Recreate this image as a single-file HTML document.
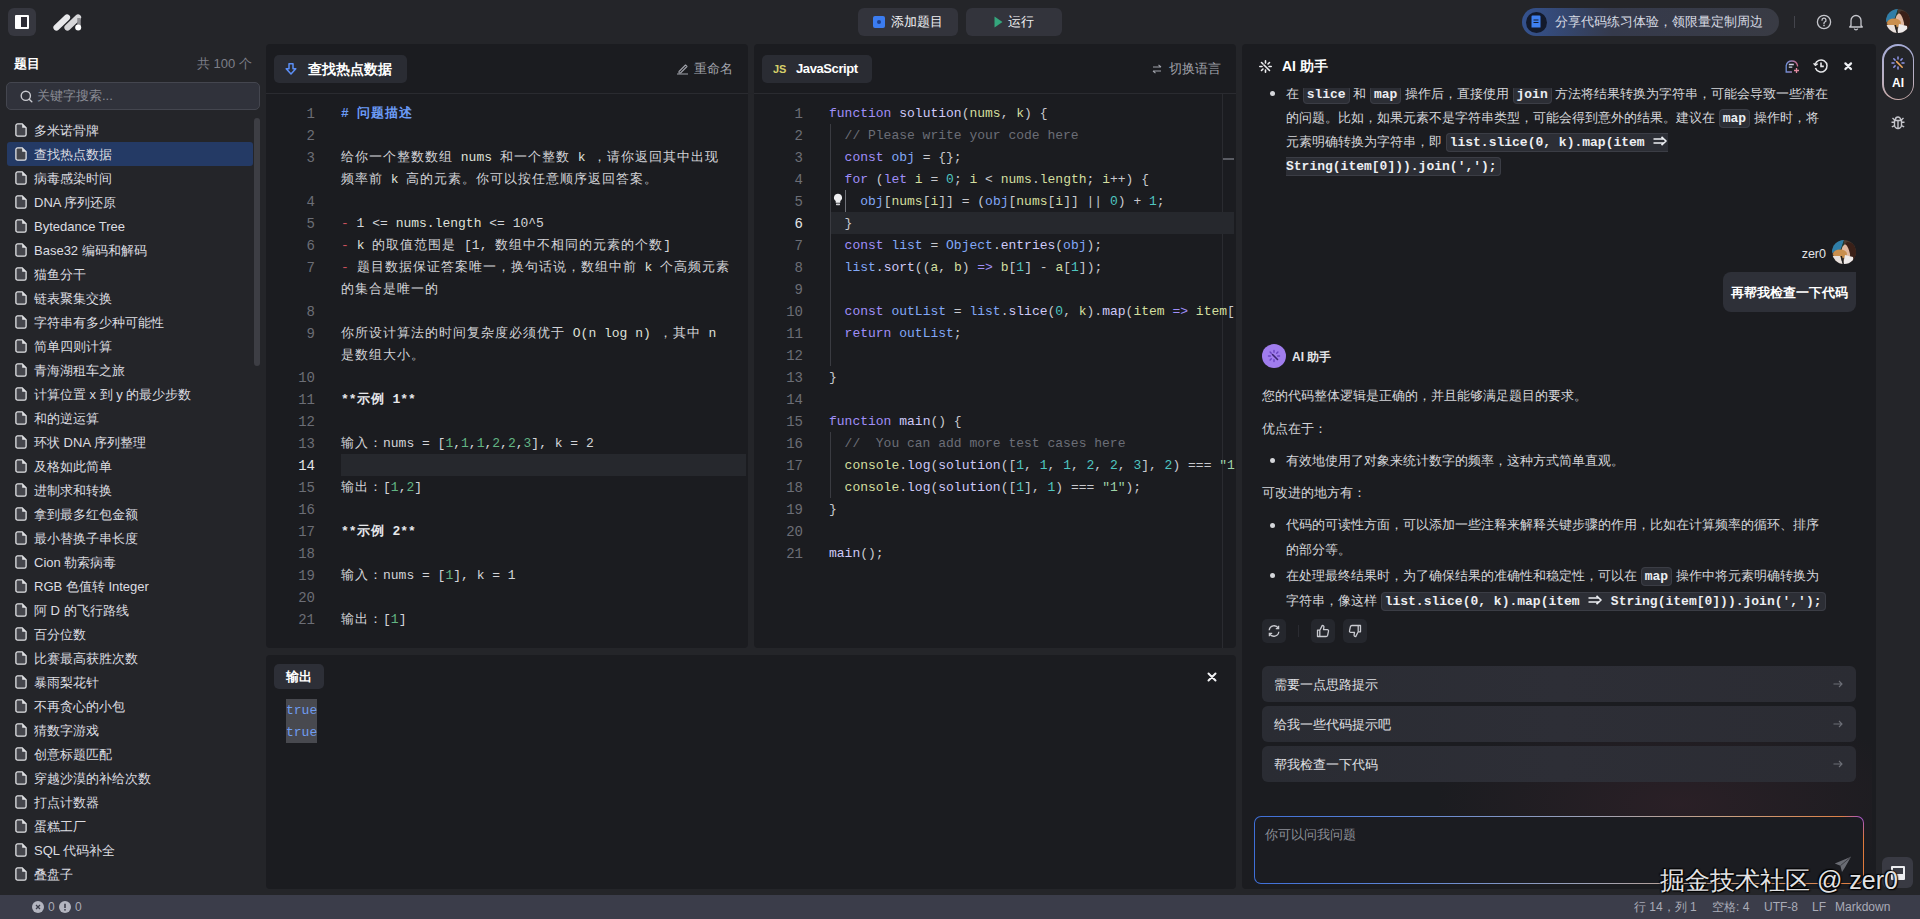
<!DOCTYPE html>
<html><head><meta charset="utf-8">
<style>
*{box-sizing:border-box;margin:0;padding:0}
html,body{width:1920px;height:919px;overflow:hidden;background:#242529;font-family:"Liberation Sans",sans-serif;color:#d4d5d9}
.abs{position:absolute}
.mono{font-family:"Liberation Mono",monospace}
/* top bar */
#top{position:absolute;left:0;top:0;width:1920px;height:44px;background:#242529}
.tbtn{position:absolute;top:8px;height:28px;border-radius:6px;background:#33343c}
/* sidebar */
#side{position:absolute;left:0;top:44px;width:266px;height:851px;background:#242529}
.item{position:absolute;left:7px;width:246px;height:24px;font-size:13px;line-height:24px;color:#dcdde1;white-space:nowrap}
.item.sel{background:#243a65;border-radius:3px}
.item svg{position:absolute;left:8px;top:5px}
.item span{position:absolute;left:27px;top:1px}
/* panels */
.panel{position:absolute;background:#1b1c20;border-radius:4px;overflow:hidden}
.phead{position:absolute;left:0;top:0;right:0;height:50px;border-bottom:1px solid #2a2b30}
.tab{position:absolute;top:11px;height:28px;border-radius:5px;background:#2a2c33;font-weight:bold;font-size:14px;color:#fff;line-height:28px}
.ed{position:absolute;left:0;top:59px;right:0;font-family:"Liberation Mono",monospace;font-size:13px;line-height:22px}
.ln{position:absolute;width:49px;text-align:right;color:#6c6e76;height:22px;font-size:14px}
.ln.act{color:#e4e5e8}
.cl{position:absolute;left:75px;white-space:pre;height:22px;color:#d2d3d6}
.cj{letter-spacing:1px}
/* status */
#status{position:absolute;left:0;top:895px;width:1920px;height:24px;background:#3b3d4a;font-size:12px;color:#a9abb7;line-height:24px}
.tl{position:absolute;font-size:13px;line-height:24px;color:#d5d6da;white-space:nowrap}
code{font-family:"Liberation Mono",monospace;font-weight:bold;font-size:13px;color:#eceef2;background:#2c2e35;border:1px solid #3b3d45;border-radius:4px;padding:1px 3px;margin:0 0px}
.dot{position:absolute;left:28px;width:5px;height:5px;border-radius:3px;background:#d5d6da}
.abtn{position:absolute;top:531px;width:24px;height:24px;border-radius:5px;background:#25272d}
.abtn svg{position:absolute;left:5px;top:5px}
.card{position:absolute;left:20px;width:594px;height:36px;border-radius:6px;background:linear-gradient(90deg,#2a2c33,#2d2e36 50%,#2b2c33);font-size:13px;color:#e0e1e5;line-height:36px}
.card span{position:absolute;left:12px;top:1px}
.card i{position:absolute;right:13px;top:14px;font-style:normal;line-height:0}
.arr{display:inline-block;width:15.6px;height:10px;position:relative;vertical-align:0px}.arr svg{position:absolute;left:0;top:0}
</style></head>
<body>
<div id="top">
  <div class="abs" style="left:8px;top:8px;width:28px;height:28px;border-radius:6px;background:#36373f"></div>
  <div class="abs" style="left:15px;top:15px;width:14px;height:14px;background:#fff;border-radius:1px"></div>
  <div class="abs" style="left:21px;top:17px;width:6px;height:10px;background:#2d2c35"></div>
  <svg class="abs" style="left:52px;top:12px" width="34" height="20" viewBox="0 0 34 20">
    <path d="M4.5 15.5L15 5.5" stroke="#e8e8ea" stroke-width="6.2" stroke-linecap="round"/>
    <path d="M15.5 15.5L26 5.5" stroke="#d6d6d8" stroke-width="6.2" stroke-linecap="round"/>
    <path d="M27 6v9" stroke="#8c8c90" stroke-width="3.5"/>
    <circle cx="26.2" cy="15.6" r="3" fill="#fff"/>
  </svg>
  <div class="tbtn" style="left:858px;width:100px"></div>
  <div class="abs" style="left:873px;top:16px;width:12px;height:12px;border-radius:2px;background:#3b7cf0"></div>
  <div class="abs" style="left:877px;top:20px;width:4px;height:4px;border-radius:2px;background:#1d3f8a"></div>
  <div class="abs" style="left:891px;top:14px;font-size:13px;color:#f0f0f2;line-height:16px">添加题目</div>
  <div class="tbtn" style="left:966px;width:96px"></div>
  <svg class="abs" style="left:994px;top:16px" width="9" height="12" viewBox="0 0 9 12"><path d="M0.5 0.5L8.5 6L0.5 11.5z" fill="#35a67d"/></svg>
  <div class="abs" style="left:1008px;top:14px;font-size:13px;color:#f0f0f2;line-height:16px">运行</div>
  <div class="abs" style="left:1522px;top:8px;width:257px;height:28px;border-radius:14px;background:linear-gradient(90deg,#34528f 0%,#353a4c 35%,#393b44 100%)"></div>
  <div class="abs" style="left:1525.5px;top:11.5px;width:21px;height:21px;border-radius:11px;background:#131a2c"></div>
  <svg class="abs" style="left:1531px;top:15px" width="10" height="13" viewBox="0 0 10 13"><path d="M1.5 0.5h7a1 1 0 0 1 1 1v11h-9v-11a1 1 0 0 1 1-1z" fill="#3f80f0"/><path d="M2.5 5h5M2.5 7.5h5" stroke="#131a2c" stroke-width="1.1"/></svg>
  <div class="abs" style="left:1555px;top:14px;font-size:13px;color:#d7dae3;line-height:16px">分享代码练习体验，领限量定制周边</div>
  <div class="abs" style="left:1794px;top:16px;width:1px;height:12px;background:#44454c"></div>
  <svg class="abs" style="left:1816px;top:14px" width="16" height="16" viewBox="0 0 16 16"><circle cx="8" cy="8" r="6.6" fill="none" stroke="#c5c6cc" stroke-width="1.3"/><path d="M6 6.2a2 2 0 1 1 2.8 1.8c-.6.3-.8.6-.8 1.3v.4" fill="none" stroke="#c5c6cc" stroke-width="1.3" stroke-linecap="round"/><circle cx="8" cy="11.6" r=".8" fill="#c5c6cc"/></svg>
  <svg class="abs" style="left:1848px;top:13px" width="16" height="18" viewBox="0 0 16 18"><path d="M3 12.5V7.5a5 5 0 0 1 10 0v5l1.3 1.5H1.7z" fill="none" stroke="#c5c6cc" stroke-width="1.3" stroke-linejoin="round"/><path d="M6.3 15.6a1.8 1.8 0 0 0 3.4 0" fill="none" stroke="#c5c6cc" stroke-width="1.3"/></svg>
  <div class="abs" style="left:1886px;top:9px;width:24px;height:24px"><svg width="24" height="24" viewBox="0 0 24 24"><defs><clipPath id="avc1"><circle cx="12" cy="12" r="12"/></clipPath></defs><g clip-path="url(#avc1)"><rect width="24" height="24" fill="#4a3a30"/><path d="M0 0h12L9 9 0 13z" fill="#2f7ea8"/><path d="M12 0l-3 9 3 1z" fill="#1d3a30"/><ellipse cx="14.5" cy="11" rx="5" ry="7" fill="#e0b8a0"/><path d="M15 2c5 0 8 3 9 8v14h-5l-1-10c-1-4-2-8-5-10z" fill="#3a2018"/><ellipse cx="8" cy="14" rx="7" ry="4.5" fill="#c98f4e"/><path d="M0 16l8 0 3 8H0z" fill="#e8e0dc"/><path d="M11 24l2-9 8 2 1 7z" fill="#eeeaea"/><path d="M10 16l2 8h-1.5l-2-8z" fill="#222"/></g></svg></div>
</div>
<div id="side">
  <div class="abs" style="left:14px;top:13px;font-size:13px;font-weight:bold;color:#fff;line-height:14px">题目</div>
  <div class="abs" style="left:197px;top:13px;font-size:13px;color:#7d7f88;line-height:14px">共 100 个</div>
  <div class="abs" style="left:6px;top:38px;width:254px;height:28px;border-radius:5px;background:#30323b;border:1px solid #44464f"></div>
  <svg class="abs" style="left:20px;top:46px" width="13" height="13" viewBox="0 0 13 13"><circle cx="5.8" cy="5.8" r="4.6" fill="none" stroke="#c9cad0" stroke-width="1.4"/><path d="M9.2 9.2l2.6 2.6" stroke="#c9cad0" stroke-width="1.4" stroke-linecap="round"/></svg>
  <div class="abs" style="left:37px;top:45px;font-size:13px;color:#8a8c95;line-height:14px">关键字搜索...</div>
  <div class="abs" style="left:254px;top:74px;width:6px;height:248px;border-radius:3px;background:#3d3e44"></div>
<div class="item" style="top:74px"><svg width="12" height="14" viewBox="0 0 12 14"><path d="M2.6 0.9h4.6l3.9 3.9v6.6a1.7 1.7 0 0 1-1.7 1.7H2.6a1.7 1.7 0 0 1-1.7-1.7V2.6a1.7 1.7 0 0 1 1.7-1.7z" fill="#45464c" stroke="#e2e3e6" stroke-width="1.3"/><path d="M7.2 0.9v3.9h3.9z" fill="#e2e3e6"/></svg><span>多米诺骨牌</span></div>
<div class="item sel" style="top:98px"><svg width="12" height="14" viewBox="0 0 12 14"><path d="M2.6 0.9h4.6l3.9 3.9v6.6a1.7 1.7 0 0 1-1.7 1.7H2.6a1.7 1.7 0 0 1-1.7-1.7V2.6a1.7 1.7 0 0 1 1.7-1.7z" fill="#45464c" stroke="#e2e3e6" stroke-width="1.3"/><path d="M7.2 0.9v3.9h3.9z" fill="#e2e3e6"/></svg><span>查找热点数据</span></div>
<div class="item" style="top:122px"><svg width="12" height="14" viewBox="0 0 12 14"><path d="M2.6 0.9h4.6l3.9 3.9v6.6a1.7 1.7 0 0 1-1.7 1.7H2.6a1.7 1.7 0 0 1-1.7-1.7V2.6a1.7 1.7 0 0 1 1.7-1.7z" fill="#45464c" stroke="#e2e3e6" stroke-width="1.3"/><path d="M7.2 0.9v3.9h3.9z" fill="#e2e3e6"/></svg><span>病毒感染时间</span></div>
<div class="item" style="top:146px"><svg width="12" height="14" viewBox="0 0 12 14"><path d="M2.6 0.9h4.6l3.9 3.9v6.6a1.7 1.7 0 0 1-1.7 1.7H2.6a1.7 1.7 0 0 1-1.7-1.7V2.6a1.7 1.7 0 0 1 1.7-1.7z" fill="#45464c" stroke="#e2e3e6" stroke-width="1.3"/><path d="M7.2 0.9v3.9h3.9z" fill="#e2e3e6"/></svg><span>DNA 序列还原</span></div>
<div class="item" style="top:170px"><svg width="12" height="14" viewBox="0 0 12 14"><path d="M2.6 0.9h4.6l3.9 3.9v6.6a1.7 1.7 0 0 1-1.7 1.7H2.6a1.7 1.7 0 0 1-1.7-1.7V2.6a1.7 1.7 0 0 1 1.7-1.7z" fill="#45464c" stroke="#e2e3e6" stroke-width="1.3"/><path d="M7.2 0.9v3.9h3.9z" fill="#e2e3e6"/></svg><span>Bytedance Tree</span></div>
<div class="item" style="top:194px"><svg width="12" height="14" viewBox="0 0 12 14"><path d="M2.6 0.9h4.6l3.9 3.9v6.6a1.7 1.7 0 0 1-1.7 1.7H2.6a1.7 1.7 0 0 1-1.7-1.7V2.6a1.7 1.7 0 0 1 1.7-1.7z" fill="#45464c" stroke="#e2e3e6" stroke-width="1.3"/><path d="M7.2 0.9v3.9h3.9z" fill="#e2e3e6"/></svg><span>Base32 编码和解码</span></div>
<div class="item" style="top:218px"><svg width="12" height="14" viewBox="0 0 12 14"><path d="M2.6 0.9h4.6l3.9 3.9v6.6a1.7 1.7 0 0 1-1.7 1.7H2.6a1.7 1.7 0 0 1-1.7-1.7V2.6a1.7 1.7 0 0 1 1.7-1.7z" fill="#45464c" stroke="#e2e3e6" stroke-width="1.3"/><path d="M7.2 0.9v3.9h3.9z" fill="#e2e3e6"/></svg><span>猫鱼分干</span></div>
<div class="item" style="top:242px"><svg width="12" height="14" viewBox="0 0 12 14"><path d="M2.6 0.9h4.6l3.9 3.9v6.6a1.7 1.7 0 0 1-1.7 1.7H2.6a1.7 1.7 0 0 1-1.7-1.7V2.6a1.7 1.7 0 0 1 1.7-1.7z" fill="#45464c" stroke="#e2e3e6" stroke-width="1.3"/><path d="M7.2 0.9v3.9h3.9z" fill="#e2e3e6"/></svg><span>链表聚集交换</span></div>
<div class="item" style="top:266px"><svg width="12" height="14" viewBox="0 0 12 14"><path d="M2.6 0.9h4.6l3.9 3.9v6.6a1.7 1.7 0 0 1-1.7 1.7H2.6a1.7 1.7 0 0 1-1.7-1.7V2.6a1.7 1.7 0 0 1 1.7-1.7z" fill="#45464c" stroke="#e2e3e6" stroke-width="1.3"/><path d="M7.2 0.9v3.9h3.9z" fill="#e2e3e6"/></svg><span>字符串有多少种可能性</span></div>
<div class="item" style="top:290px"><svg width="12" height="14" viewBox="0 0 12 14"><path d="M2.6 0.9h4.6l3.9 3.9v6.6a1.7 1.7 0 0 1-1.7 1.7H2.6a1.7 1.7 0 0 1-1.7-1.7V2.6a1.7 1.7 0 0 1 1.7-1.7z" fill="#45464c" stroke="#e2e3e6" stroke-width="1.3"/><path d="M7.2 0.9v3.9h3.9z" fill="#e2e3e6"/></svg><span>简单四则计算</span></div>
<div class="item" style="top:314px"><svg width="12" height="14" viewBox="0 0 12 14"><path d="M2.6 0.9h4.6l3.9 3.9v6.6a1.7 1.7 0 0 1-1.7 1.7H2.6a1.7 1.7 0 0 1-1.7-1.7V2.6a1.7 1.7 0 0 1 1.7-1.7z" fill="#45464c" stroke="#e2e3e6" stroke-width="1.3"/><path d="M7.2 0.9v3.9h3.9z" fill="#e2e3e6"/></svg><span>青海湖租车之旅</span></div>
<div class="item" style="top:338px"><svg width="12" height="14" viewBox="0 0 12 14"><path d="M2.6 0.9h4.6l3.9 3.9v6.6a1.7 1.7 0 0 1-1.7 1.7H2.6a1.7 1.7 0 0 1-1.7-1.7V2.6a1.7 1.7 0 0 1 1.7-1.7z" fill="#45464c" stroke="#e2e3e6" stroke-width="1.3"/><path d="M7.2 0.9v3.9h3.9z" fill="#e2e3e6"/></svg><span>计算位置 x 到 y 的最少步数</span></div>
<div class="item" style="top:362px"><svg width="12" height="14" viewBox="0 0 12 14"><path d="M2.6 0.9h4.6l3.9 3.9v6.6a1.7 1.7 0 0 1-1.7 1.7H2.6a1.7 1.7 0 0 1-1.7-1.7V2.6a1.7 1.7 0 0 1 1.7-1.7z" fill="#45464c" stroke="#e2e3e6" stroke-width="1.3"/><path d="M7.2 0.9v3.9h3.9z" fill="#e2e3e6"/></svg><span>和的逆运算</span></div>
<div class="item" style="top:386px"><svg width="12" height="14" viewBox="0 0 12 14"><path d="M2.6 0.9h4.6l3.9 3.9v6.6a1.7 1.7 0 0 1-1.7 1.7H2.6a1.7 1.7 0 0 1-1.7-1.7V2.6a1.7 1.7 0 0 1 1.7-1.7z" fill="#45464c" stroke="#e2e3e6" stroke-width="1.3"/><path d="M7.2 0.9v3.9h3.9z" fill="#e2e3e6"/></svg><span>环状 DNA 序列整理</span></div>
<div class="item" style="top:410px"><svg width="12" height="14" viewBox="0 0 12 14"><path d="M2.6 0.9h4.6l3.9 3.9v6.6a1.7 1.7 0 0 1-1.7 1.7H2.6a1.7 1.7 0 0 1-1.7-1.7V2.6a1.7 1.7 0 0 1 1.7-1.7z" fill="#45464c" stroke="#e2e3e6" stroke-width="1.3"/><path d="M7.2 0.9v3.9h3.9z" fill="#e2e3e6"/></svg><span>及格如此简单</span></div>
<div class="item" style="top:434px"><svg width="12" height="14" viewBox="0 0 12 14"><path d="M2.6 0.9h4.6l3.9 3.9v6.6a1.7 1.7 0 0 1-1.7 1.7H2.6a1.7 1.7 0 0 1-1.7-1.7V2.6a1.7 1.7 0 0 1 1.7-1.7z" fill="#45464c" stroke="#e2e3e6" stroke-width="1.3"/><path d="M7.2 0.9v3.9h3.9z" fill="#e2e3e6"/></svg><span>进制求和转换</span></div>
<div class="item" style="top:458px"><svg width="12" height="14" viewBox="0 0 12 14"><path d="M2.6 0.9h4.6l3.9 3.9v6.6a1.7 1.7 0 0 1-1.7 1.7H2.6a1.7 1.7 0 0 1-1.7-1.7V2.6a1.7 1.7 0 0 1 1.7-1.7z" fill="#45464c" stroke="#e2e3e6" stroke-width="1.3"/><path d="M7.2 0.9v3.9h3.9z" fill="#e2e3e6"/></svg><span>拿到最多红包金额</span></div>
<div class="item" style="top:482px"><svg width="12" height="14" viewBox="0 0 12 14"><path d="M2.6 0.9h4.6l3.9 3.9v6.6a1.7 1.7 0 0 1-1.7 1.7H2.6a1.7 1.7 0 0 1-1.7-1.7V2.6a1.7 1.7 0 0 1 1.7-1.7z" fill="#45464c" stroke="#e2e3e6" stroke-width="1.3"/><path d="M7.2 0.9v3.9h3.9z" fill="#e2e3e6"/></svg><span>最小替换子串长度</span></div>
<div class="item" style="top:506px"><svg width="12" height="14" viewBox="0 0 12 14"><path d="M2.6 0.9h4.6l3.9 3.9v6.6a1.7 1.7 0 0 1-1.7 1.7H2.6a1.7 1.7 0 0 1-1.7-1.7V2.6a1.7 1.7 0 0 1 1.7-1.7z" fill="#45464c" stroke="#e2e3e6" stroke-width="1.3"/><path d="M7.2 0.9v3.9h3.9z" fill="#e2e3e6"/></svg><span>Cion 勒索病毒</span></div>
<div class="item" style="top:530px"><svg width="12" height="14" viewBox="0 0 12 14"><path d="M2.6 0.9h4.6l3.9 3.9v6.6a1.7 1.7 0 0 1-1.7 1.7H2.6a1.7 1.7 0 0 1-1.7-1.7V2.6a1.7 1.7 0 0 1 1.7-1.7z" fill="#45464c" stroke="#e2e3e6" stroke-width="1.3"/><path d="M7.2 0.9v3.9h3.9z" fill="#e2e3e6"/></svg><span>RGB 色值转 Integer</span></div>
<div class="item" style="top:554px"><svg width="12" height="14" viewBox="0 0 12 14"><path d="M2.6 0.9h4.6l3.9 3.9v6.6a1.7 1.7 0 0 1-1.7 1.7H2.6a1.7 1.7 0 0 1-1.7-1.7V2.6a1.7 1.7 0 0 1 1.7-1.7z" fill="#45464c" stroke="#e2e3e6" stroke-width="1.3"/><path d="M7.2 0.9v3.9h3.9z" fill="#e2e3e6"/></svg><span>阿 D 的飞行路线</span></div>
<div class="item" style="top:578px"><svg width="12" height="14" viewBox="0 0 12 14"><path d="M2.6 0.9h4.6l3.9 3.9v6.6a1.7 1.7 0 0 1-1.7 1.7H2.6a1.7 1.7 0 0 1-1.7-1.7V2.6a1.7 1.7 0 0 1 1.7-1.7z" fill="#45464c" stroke="#e2e3e6" stroke-width="1.3"/><path d="M7.2 0.9v3.9h3.9z" fill="#e2e3e6"/></svg><span>百分位数</span></div>
<div class="item" style="top:602px"><svg width="12" height="14" viewBox="0 0 12 14"><path d="M2.6 0.9h4.6l3.9 3.9v6.6a1.7 1.7 0 0 1-1.7 1.7H2.6a1.7 1.7 0 0 1-1.7-1.7V2.6a1.7 1.7 0 0 1 1.7-1.7z" fill="#45464c" stroke="#e2e3e6" stroke-width="1.3"/><path d="M7.2 0.9v3.9h3.9z" fill="#e2e3e6"/></svg><span>比赛最高获胜次数</span></div>
<div class="item" style="top:626px"><svg width="12" height="14" viewBox="0 0 12 14"><path d="M2.6 0.9h4.6l3.9 3.9v6.6a1.7 1.7 0 0 1-1.7 1.7H2.6a1.7 1.7 0 0 1-1.7-1.7V2.6a1.7 1.7 0 0 1 1.7-1.7z" fill="#45464c" stroke="#e2e3e6" stroke-width="1.3"/><path d="M7.2 0.9v3.9h3.9z" fill="#e2e3e6"/></svg><span>暴雨梨花针</span></div>
<div class="item" style="top:650px"><svg width="12" height="14" viewBox="0 0 12 14"><path d="M2.6 0.9h4.6l3.9 3.9v6.6a1.7 1.7 0 0 1-1.7 1.7H2.6a1.7 1.7 0 0 1-1.7-1.7V2.6a1.7 1.7 0 0 1 1.7-1.7z" fill="#45464c" stroke="#e2e3e6" stroke-width="1.3"/><path d="M7.2 0.9v3.9h3.9z" fill="#e2e3e6"/></svg><span>不再贪心的小包</span></div>
<div class="item" style="top:674px"><svg width="12" height="14" viewBox="0 0 12 14"><path d="M2.6 0.9h4.6l3.9 3.9v6.6a1.7 1.7 0 0 1-1.7 1.7H2.6a1.7 1.7 0 0 1-1.7-1.7V2.6a1.7 1.7 0 0 1 1.7-1.7z" fill="#45464c" stroke="#e2e3e6" stroke-width="1.3"/><path d="M7.2 0.9v3.9h3.9z" fill="#e2e3e6"/></svg><span>猜数字游戏</span></div>
<div class="item" style="top:698px"><svg width="12" height="14" viewBox="0 0 12 14"><path d="M2.6 0.9h4.6l3.9 3.9v6.6a1.7 1.7 0 0 1-1.7 1.7H2.6a1.7 1.7 0 0 1-1.7-1.7V2.6a1.7 1.7 0 0 1 1.7-1.7z" fill="#45464c" stroke="#e2e3e6" stroke-width="1.3"/><path d="M7.2 0.9v3.9h3.9z" fill="#e2e3e6"/></svg><span>创意标题匹配</span></div>
<div class="item" style="top:722px"><svg width="12" height="14" viewBox="0 0 12 14"><path d="M2.6 0.9h4.6l3.9 3.9v6.6a1.7 1.7 0 0 1-1.7 1.7H2.6a1.7 1.7 0 0 1-1.7-1.7V2.6a1.7 1.7 0 0 1 1.7-1.7z" fill="#45464c" stroke="#e2e3e6" stroke-width="1.3"/><path d="M7.2 0.9v3.9h3.9z" fill="#e2e3e6"/></svg><span>穿越沙漠的补给次数</span></div>
<div class="item" style="top:746px"><svg width="12" height="14" viewBox="0 0 12 14"><path d="M2.6 0.9h4.6l3.9 3.9v6.6a1.7 1.7 0 0 1-1.7 1.7H2.6a1.7 1.7 0 0 1-1.7-1.7V2.6a1.7 1.7 0 0 1 1.7-1.7z" fill="#45464c" stroke="#e2e3e6" stroke-width="1.3"/><path d="M7.2 0.9v3.9h3.9z" fill="#e2e3e6"/></svg><span>打点计数器</span></div>
<div class="item" style="top:770px"><svg width="12" height="14" viewBox="0 0 12 14"><path d="M2.6 0.9h4.6l3.9 3.9v6.6a1.7 1.7 0 0 1-1.7 1.7H2.6a1.7 1.7 0 0 1-1.7-1.7V2.6a1.7 1.7 0 0 1 1.7-1.7z" fill="#45464c" stroke="#e2e3e6" stroke-width="1.3"/><path d="M7.2 0.9v3.9h3.9z" fill="#e2e3e6"/></svg><span>蛋糕工厂</span></div>
<div class="item" style="top:794px"><svg width="12" height="14" viewBox="0 0 12 14"><path d="M2.6 0.9h4.6l3.9 3.9v6.6a1.7 1.7 0 0 1-1.7 1.7H2.6a1.7 1.7 0 0 1-1.7-1.7V2.6a1.7 1.7 0 0 1 1.7-1.7z" fill="#45464c" stroke="#e2e3e6" stroke-width="1.3"/><path d="M7.2 0.9v3.9h3.9z" fill="#e2e3e6"/></svg><span>SQL 代码补全</span></div>
<div class="item" style="top:818px"><svg width="12" height="14" viewBox="0 0 12 14"><path d="M2.6 0.9h4.6l3.9 3.9v6.6a1.7 1.7 0 0 1-1.7 1.7H2.6a1.7 1.7 0 0 1-1.7-1.7V2.6a1.7 1.7 0 0 1 1.7-1.7z" fill="#45464c" stroke="#e2e3e6" stroke-width="1.3"/><path d="M7.2 0.9v3.9h3.9z" fill="#e2e3e6"/></svg><span>叠盘子</span></div>
</div>
<div class="panel" id="p1" style="left:266px;top:44px;width:482px;height:604px">
  <div class="phead">
    <div class="tab" style="left:8px;width:133px"></div>
    <svg class="abs" style="left:19px;top:19px" width="12" height="12" viewBox="0 0 12 12"><path d="M4 0.8h4v5h2.8L6 11 1.2 5.8H4z" fill="none" stroke="#5b8ef5" stroke-width="1.5" stroke-linejoin="round"/></svg>
    <div class="abs" style="left:42px;top:17px;font-size:14px;font-weight:bold;color:#fff;line-height:16px">查找热点数据</div>
    <svg class="abs" style="left:410px;top:18px" width="13" height="13" viewBox="0 0 13 13"><path d="M3 9.5l6.5-6.5 1.5 1.5-6.5 6.5H3z" fill="none" stroke="#9fa1a9" stroke-width="1.1" stroke-linejoin="round"/><path d="M1 12h11" stroke="#9fa1a9" stroke-width="1.1"/></svg>
    <div class="abs" style="left:428px;top:17px;font-size:13px;color:#a3a5ad;line-height:16px">重命名</div>
  </div>
  <div class="abs" style="left:75px;top:410px;width:405px;height:22px;background:#26282d"></div>
  <div class="ed">
<div class="ln" style="top:0px">1</div>
<div class="cl" style="top:0px"><span style="color:#6b9bf7;font-weight:bold"># <span class="cj">问题描述</span></span></div>
<div class="ln" style="top:22px">2</div>
<div class="ln" style="top:44px">3</div>
<div class="cl" style="top:44px"><span style="color:#d3d4d8"><span class="cj">给你一个整数数组</span> </span><span style="color:#dfe0d8">nums</span><span style="color:#d3d4d8"> <span class="cj">和一个整数</span> </span><span style="color:#dfe0d8">k</span><span style="color:#d3d4d8"> <span class="cj">，请你返回其中出现</span></span></div>
<div class="cl" style="top:66px"><span style="color:#d3d4d8"><span class="cj">频率前</span> </span><span style="color:#dfe0d8">k</span><span style="color:#d3d4d8"> <span class="cj">高的元素。你可以按任意顺序返回答案。</span></span></div>
<div class="ln" style="top:88px">4</div>
<div class="ln" style="top:110px">5</div>
<div class="cl" style="top:110px"><span style="color:#c9505c">-</span><span style="color:#d3d4d8"> 1 &lt;= </span><span style="color:#dfe0d8">nums.length</span><span style="color:#d3d4d8"> &lt;= 10^5</span></div>
<div class="ln" style="top:132px">6</div>
<div class="cl" style="top:132px"><span style="color:#c9505c">-</span><span style="color:#d3d4d8"> </span><span style="color:#dfe0d8">k</span><span style="color:#d3d4d8"> <span class="cj">的取值范围是</span> [1, <span class="cj">数组中不相同的元素的个数</span>]</span></div>
<div class="ln" style="top:154px">7</div>
<div class="cl" style="top:154px"><span style="color:#c9505c">-</span><span style="color:#d3d4d8"> <span class="cj">题目数据保证答案唯一，换句话说，数组中前</span> </span><span style="color:#dfe0d8">k</span><span style="color:#d3d4d8"> <span class="cj">个高频元素</span></span></div>
<div class="cl" style="top:176px"><span style="color:#d3d4d8"><span class="cj">的集合是唯一的</span></span></div>
<div class="ln" style="top:198px">8</div>
<div class="ln" style="top:220px">9</div>
<div class="cl" style="top:220px"><span style="color:#d3d4d8"><span class="cj">你所设计算法的时间复杂度必须优于</span> </span><span style="color:#dfe0d8">O(n log n)</span><span style="color:#d3d4d8"> <span class="cj">，其中</span> </span><span style="color:#dfe0d8">n</span></div>
<div class="cl" style="top:242px"><span style="color:#d3d4d8"><span class="cj">是数组大小。</span></span></div>
<div class="ln" style="top:264px">10</div>
<div class="ln" style="top:286px">11</div>
<div class="cl" style="top:286px"><span style="color:#e6e7ea;font-weight:bold">**<span class="cj">示例</span> 1**</span></div>
<div class="ln" style="top:308px">12</div>
<div class="ln" style="top:330px">13</div>
<div class="cl" style="top:330px"><span style="color:#d3d4d8"><span class="cj">输入：</span>nums = [</span><span style="color:#62b584">1</span><span style="color:#d3d4d8">,</span><span style="color:#62b584">1</span><span style="color:#d3d4d8">,</span><span style="color:#62b584">1</span><span style="color:#d3d4d8">,</span><span style="color:#62b584">2</span><span style="color:#d3d4d8">,</span><span style="color:#62b584">2</span><span style="color:#d3d4d8">,</span><span style="color:#62b584">3</span><span style="color:#d3d4d8">], k = 2</span></div>
<div class="ln act" style="top:352px">14</div>
<div class="ln" style="top:374px">15</div>
<div class="cl" style="top:374px"><span style="color:#d3d4d8"><span class="cj">输出：</span>[</span><span style="color:#62b584">1</span><span style="color:#d3d4d8">,</span><span style="color:#62b584">2</span><span style="color:#d3d4d8">]</span></div>
<div class="ln" style="top:396px">16</div>
<div class="ln" style="top:418px">17</div>
<div class="cl" style="top:418px"><span style="color:#e6e7ea;font-weight:bold">**<span class="cj">示例</span> 2**</span></div>
<div class="ln" style="top:440px">18</div>
<div class="ln" style="top:462px">19</div>
<div class="cl" style="top:462px"><span style="color:#d3d4d8"><span class="cj">输入：</span>nums = [</span><span style="color:#62b584">1</span><span style="color:#d3d4d8">], k = 1</span></div>
<div class="ln" style="top:484px">20</div>
<div class="ln" style="top:506px">21</div>
<div class="cl" style="top:506px"><span style="color:#d3d4d8"><span class="cj">输出：</span>[</span><span style="color:#62b584">1</span><span style="color:#d3d4d8">]</span></div>
  </div>
</div>
<div class="panel" id="p2" style="left:754px;top:44px;width:482px;height:604px">
  <div class="phead">
    <div class="tab" style="left:8px;width:110px"></div>
    <div class="abs" style="left:19px;top:18px;font-size:11px;font-weight:bold;color:#d6d06a;line-height:15px">JS</div>
    <div class="abs" style="left:42px;top:17px;font-size:13px;font-weight:bold;color:#fff;line-height:16px;letter-spacing:-0.4px">JavaScript</div>
    <svg class="abs" style="left:398px;top:20px" width="10" height="10" viewBox="0 0 10 10"><path d="M1 3h8M6.5 0.8L9 3M9 7H1M3.5 9.2L1 7" fill="none" stroke="#9fa1a9" stroke-width="1.1"/></svg>
    <div class="abs" style="left:415px;top:17px;font-size:13px;color:#a3a5ad;line-height:16px">切换语言</div>
  </div>
  <div class="abs" style="left:468px;top:50px;width:14px;height:554px;border-left:1px solid #2a2b30"></div>
  <div class="abs" style="left:469px;top:114px;width:11px;height:2px;background:#5a5c63"></div>
  <div class="abs" style="left:76px;top:168px;width:404px;height:22px;background:#26282d"></div>
  <div class="abs" style="left:76px;top:80px;width:1px;height:242px;background:#3a3b41"></div>
  <div class="abs" style="left:76px;top:388px;width:1px;height:66px;background:#3a3b41"></div>
  <div class="abs" style="left:91px;top:146px;width:1px;height:22px;background:#6e7077"></div>
  <svg class="abs" style="left:79px;top:149px" width="10" height="13" viewBox="0 0 10 13"><path d="M5 0.8a4 4 0 0 0-2.3 7.3v1.7h4.6V8.1A4 4 0 0 0 5 0.8z" fill="#eeeef0"/><rect x="3" y="10.4" width="4" height="1.8" rx=".6" fill="#d0d0d4"/></svg>
  <div class="ed">
<div class="ln" style="top:0px">1</div>
<div class="cl" style="top:0px"><span style="color:#a08ff8">function</span><span style="color:#c8c9ce"> </span><span style="color:#cfcaf9">solution</span><span style="color:#c8c9ce">(</span><span style="color:#d3df9f">nums</span><span style="color:#c8c9ce">, </span><span style="color:#d3df9f">k</span><span style="color:#c8c9ce">) {</span></div>
<div class="ln" style="top:22px">2</div>
<div class="cl" style="top:22px"><span style="color:#6b6e77">  // Please write your code here</span></div>
<div class="ln" style="top:44px">3</div>
<div class="cl" style="top:44px"><span style="color:#c8c9ce">  </span><span style="color:#a08ff8">const</span><span style="color:#c8c9ce"> </span><span style="color:#82a8f7">obj</span><span style="color:#c8c9ce"> = {};</span></div>
<div class="ln" style="top:66px">4</div>
<div class="cl" style="top:66px"><span style="color:#c8c9ce">  </span><span style="color:#a08ff8">for</span><span style="color:#c8c9ce"> (</span><span style="color:#a08ff8">let</span><span style="color:#c8c9ce"> </span><span style="color:#d3df9f">i</span><span style="color:#c8c9ce"> = </span><span style="color:#4fc6c0">0</span><span style="color:#c8c9ce">; </span><span style="color:#d3df9f">i</span><span style="color:#c8c9ce"> &lt; </span><span style="color:#d3df9f">nums</span><span style="color:#c8c9ce">.</span><span style="color:#d3df9f">length</span><span style="color:#c8c9ce">; </span><span style="color:#d3df9f">i</span><span style="color:#c8c9ce">++) {</span></div>
<div class="ln" style="top:88px">5</div>
<div class="cl" style="top:88px"><span style="color:#c8c9ce">    </span><span style="color:#82a8f7">obj</span><span style="color:#c8c9ce">[</span><span style="color:#d3df9f">nums</span><span style="color:#c8c9ce">[</span><span style="color:#d3df9f">i</span><span style="color:#c8c9ce">]] = (</span><span style="color:#82a8f7">obj</span><span style="color:#c8c9ce">[</span><span style="color:#d3df9f">nums</span><span style="color:#c8c9ce">[</span><span style="color:#d3df9f">i</span><span style="color:#c8c9ce">]] || </span><span style="color:#4fc6c0">0</span><span style="color:#c8c9ce">) + </span><span style="color:#4fc6c0">1</span><span style="color:#c8c9ce">;</span></div>
<div class="ln act" style="top:110px">6</div>
<div class="cl" style="top:110px"><span style="color:#c8c9ce">  }</span></div>
<div class="ln" style="top:132px">7</div>
<div class="cl" style="top:132px"><span style="color:#c8c9ce">  </span><span style="color:#a08ff8">const</span><span style="color:#c8c9ce"> </span><span style="color:#82a8f7">list</span><span style="color:#c8c9ce"> = </span><span style="color:#82a8f7">Object</span><span style="color:#c8c9ce">.</span><span style="color:#cfcaf9">entries</span><span style="color:#c8c9ce">(</span><span style="color:#82a8f7">obj</span><span style="color:#c8c9ce">);</span></div>
<div class="ln" style="top:154px">8</div>
<div class="cl" style="top:154px"><span style="color:#c8c9ce">  </span><span style="color:#82a8f7">list</span><span style="color:#c8c9ce">.</span><span style="color:#cfcaf9">sort</span><span style="color:#c8c9ce">((</span><span style="color:#d3df9f">a</span><span style="color:#c8c9ce">, </span><span style="color:#d3df9f">b</span><span style="color:#c8c9ce">) </span><span style="color:#a08ff8">=&gt;</span><span style="color:#c8c9ce"> </span><span style="color:#d3df9f">b</span><span style="color:#c8c9ce">[</span><span style="color:#4fc6c0">1</span><span style="color:#c8c9ce">] - </span><span style="color:#d3df9f">a</span><span style="color:#c8c9ce">[</span><span style="color:#4fc6c0">1</span><span style="color:#c8c9ce">]);</span></div>
<div class="ln" style="top:176px">9</div>
<div class="ln" style="top:198px">10</div>
<div class="cl" style="top:198px"><span style="color:#c8c9ce">  </span><span style="color:#a08ff8">const</span><span style="color:#c8c9ce"> </span><span style="color:#82a8f7">outList</span><span style="color:#c8c9ce"> = </span><span style="color:#82a8f7">list</span><span style="color:#c8c9ce">.</span><span style="color:#cfcaf9">slice</span><span style="color:#c8c9ce">(</span><span style="color:#4fc6c0">0</span><span style="color:#c8c9ce">, </span><span style="color:#d3df9f">k</span><span style="color:#c8c9ce">).</span><span style="color:#cfcaf9">map</span><span style="color:#c8c9ce">(</span><span style="color:#d3df9f">item</span><span style="color:#c8c9ce"> </span><span style="color:#a08ff8">=&gt;</span><span style="color:#c8c9ce"> </span><span style="color:#d3df9f">item</span><span style="color:#c8c9ce">[</span></div>
<div class="ln" style="top:220px">11</div>
<div class="cl" style="top:220px"><span style="color:#c8c9ce">  </span><span style="color:#a08ff8">return</span><span style="color:#c8c9ce"> </span><span style="color:#82a8f7">outList</span><span style="color:#c8c9ce">;</span></div>
<div class="ln" style="top:242px">12</div>
<div class="ln" style="top:264px">13</div>
<div class="cl" style="top:264px"><span style="color:#c8c9ce">}</span></div>
<div class="ln" style="top:286px">14</div>
<div class="ln" style="top:308px">15</div>
<div class="cl" style="top:308px"><span style="color:#a08ff8">function</span><span style="color:#c8c9ce"> </span><span style="color:#cfcaf9">main</span><span style="color:#c8c9ce">() {</span></div>
<div class="ln" style="top:330px">16</div>
<div class="cl" style="top:330px"><span style="color:#6b6e77">  //  You can add more test cases here</span></div>
<div class="ln" style="top:352px">17</div>
<div class="cl" style="top:352px"><span style="color:#c8c9ce">  </span><span style="color:#d3df9f">console</span><span style="color:#c8c9ce">.</span><span style="color:#cfcaf9">log</span><span style="color:#c8c9ce">(</span><span style="color:#cfcaf9">solution</span><span style="color:#c8c9ce">([</span><span style="color:#4fc6c0">1</span><span style="color:#c8c9ce">, </span><span style="color:#4fc6c0">1</span><span style="color:#c8c9ce">, </span><span style="color:#4fc6c0">1</span><span style="color:#c8c9ce">, </span><span style="color:#4fc6c0">2</span><span style="color:#c8c9ce">, </span><span style="color:#4fc6c0">2</span><span style="color:#c8c9ce">, </span><span style="color:#4fc6c0">3</span><span style="color:#c8c9ce">], </span><span style="color:#4fc6c0">2</span><span style="color:#c8c9ce">) === </span><span style="color:#9fd3a8">"1</span></div>
<div class="ln" style="top:374px">18</div>
<div class="cl" style="top:374px"><span style="color:#c8c9ce">  </span><span style="color:#d3df9f">console</span><span style="color:#c8c9ce">.</span><span style="color:#cfcaf9">log</span><span style="color:#c8c9ce">(</span><span style="color:#cfcaf9">solution</span><span style="color:#c8c9ce">([</span><span style="color:#4fc6c0">1</span><span style="color:#c8c9ce">], </span><span style="color:#4fc6c0">1</span><span style="color:#c8c9ce">) === </span><span style="color:#9fd3a8">"1"</span><span style="color:#c8c9ce">);</span></div>
<div class="ln" style="top:396px">19</div>
<div class="cl" style="top:396px"><span style="color:#c8c9ce">}</span></div>
<div class="ln" style="top:418px">20</div>
<div class="ln" style="top:440px">21</div>
<div class="cl" style="top:440px"><span style="color:#cfcaf9">main</span><span style="color:#c8c9ce">();</span></div>
  </div>
</div>
<div class="panel" id="p3" style="left:266px;top:655px;width:970px;height:234px">
  <div class="abs" style="left:8px;top:9px;width:50px;height:25px;border-radius:5px;background:#2d2f37"></div>
  <div class="abs" style="left:20px;top:14px;font-size:13px;font-weight:bold;color:#fff;line-height:15px">输出</div>
  <svg class="abs" style="left:941px;top:17px" width="10" height="10" viewBox="0 0 10 10"><path d="M1.5 1.5l7 7M8.5 1.5l-7 7" stroke="#f2f2f4" stroke-width="2" stroke-linecap="round"/></svg>
  <div class="abs" style="left:20px;top:44px;width:31px;height:44px;background:#48494f"></div>
  <div class="abs mono" style="left:20px;top:45px;font-size:13px;line-height:22px;color:#6f9cf0">true<br>true</div>
</div>
<div class="panel" id="ai" style="left:1242px;top:44px;width:634px;height:845px">
  <svg class="abs" style="left:17px;top:16px" width="13" height="13" viewBox="0 0 13 13"><g stroke="#f0f0f2" stroke-width="1.6" stroke-linecap="round"><path d="M6.5 0.8v2.2M6.5 10v2.2M0.8 6.5h2.2M10 6.5h2.2M2.5 2.5l1.5 1.5M9 9l1.5 1.5M10.5 2.5L9 4M4 9l-1.5 1.5"/><path d="M5 5l3.5 3.5"/></g></svg>
  <div class="abs" style="left:40px;top:14px;font-size:14px;font-weight:bold;color:#fff;line-height:16px">AI 助手</div>
  <svg class="abs" style="left:542px;top:14px" width="16" height="16" viewBox="0 0 16 16"><defs><linearGradient id="ncg" x1="0" x2="1" y1="0" y2="0"><stop offset="0" stop-color="#6f8fd8"/><stop offset="1" stop-color="#c86a8a"/></linearGradient></defs><path d="M13.5 8.5V7.5A5.8 5.8 0 0 0 2.2 7.5V14H8" fill="none" stroke="url(#ncg)" stroke-width="1.3"/><path d="M4.8 6.5h5M4.8 9.2h3.5" stroke="#d0d4e4" stroke-width="1.3"/><path d="M12.5 10v5M10 12.5h5" stroke="#e08aa0" stroke-width="1.3"/></svg>
  <svg class="abs" style="left:571px;top:14px" width="16" height="16" viewBox="0 0 16 16"><path d="M2.2 6.5A6 6 0 1 1 2.4 10" fill="none" stroke="#e6e7ea" stroke-width="1.5"/><path d="M0.6 5.2l1.8 2.2 2.3-1.7" fill="none" stroke="#e6e7ea" stroke-width="1.4"/><path d="M8 4.6V8.4h2.8" fill="none" stroke="#e6e7ea" stroke-width="1.6"/></svg>
  <svg class="abs" style="left:601px;top:17px" width="10" height="10" viewBox="0 0 10 10"><path d="M2.4 2.4l5.6 5.6M8 2.4L2.4 8" stroke="#eceef2" stroke-width="2.3" stroke-linecap="round"/></svg>
  <div class="abs" style="left:150px;top:640px;width:480px;height:200px;background:radial-gradient(ellipse at 60% 60%,rgba(120,50,70,0.16) 0,rgba(120,50,70,0) 60%)"></div>
  <div class="abs" id="aiclip" style="left:0;top:44px;width:634px;height:700px;overflow:hidden">
    <div class="dot" style="top:3px"></div>
    <div class="tl" style="left:44px;top:-6.5px">在 <code>slice</code> 和 <code>map</code> 操作后，直接使用 <code>join</code> 方法将结果转换为字符串，可能会导致一些潜在</div>
    <div class="tl" style="left:44px;top:17.5px">的问题。比如，如果元素不是字符串类型，可能会得到意外的结果。建议在 <code>map</code> 操作时，将</div>
    <div class="tl" style="left:44px;top:42px">元素明确转换为字符串，即 <code style="border-right:0;padding-right:0;border-radius:4px 0 0 4px">list.slice(0, k).map(item <span class="arr"><svg width="16" height="10" viewBox="0 0 16 10"><path d="M1.5 3h11M1.5 7h11M9.5 0.8L14 5 9.5 9.2" fill="none" stroke="#eceef2" stroke-width="1.7" stroke-linejoin="round"/></svg></span></code></div>
    <div class="tl" style="left:44px;top:65.5px"><code style="margin-left:0;padding-left:0;border-left:0;border-radius:0 4px 4px 0">String(item[0])).join(',');</code></div>

    <div class="abs" style="left:520px;top:159px;width:64px;text-align:right;font-size:12.5px;font-weight:normal;color:#e4e5e8;line-height:14px">zer0</div>
    <div class="abs" style="left:590px;top:152px;width:24px;height:24px"><svg width="24" height="24" viewBox="0 0 24 24"><defs><clipPath id="avc2"><circle cx="12" cy="12" r="12"/></clipPath></defs><g clip-path="url(#avc2)"><rect width="24" height="24" fill="#4a3a30"/><path d="M0 0h12L9 9 0 13z" fill="#2f7ea8"/><path d="M12 0l-3 9 3 1z" fill="#1d3a30"/><ellipse cx="14.5" cy="11" rx="5" ry="7" fill="#e0b8a0"/><path d="M15 2c5 0 8 3 9 8v14h-5l-1-10c-1-4-2-8-5-10z" fill="#3a2018"/><ellipse cx="8" cy="14" rx="7" ry="4.5" fill="#c98f4e"/><path d="M0 16l8 0 3 8H0z" fill="#e8e0dc"/><path d="M11 24l2-9 8 2 1 7z" fill="#eeeaea"/><path d="M10 16l2 8h-1.5l-2-8z" fill="#222"/></g></svg></div>
    <div class="abs" style="left:481px;top:184px;width:133px;height:40px;border-radius:8px 0 8px 8px;background:#2e3038"></div>
    <div class="abs" style="left:489px;top:197px;font-size:13px;font-weight:bold;color:#fff;line-height:16px">再帮我检查一下代码</div>

    <div class="abs" style="left:20px;top:256px;width:24px;height:24px;border-radius:12px;background:#a07ded"></div>
    <svg class="abs" style="left:25px;top:261px" width="14" height="14" viewBox="0 0 14 14"><g stroke="#6a45c0" stroke-width="1.4" stroke-linecap="round"><path d="M7 1.5v1.8M7 10.7v1.8M1.5 7h1.8M10.7 7h1.8M3.1 3.1l1.2 1.2M3.1 10.9l1.2-1.2M10.9 3.1l-1.2 1.2"/><path d="M5.5 5.5l5 5" stroke="#3a2470" stroke-width="1.6"/></g></svg>
    <div class="abs" style="left:50px;top:262px;font-size:12px;font-weight:bold;color:#e4e5e8;line-height:14px">AI 助手</div>

    <div class="tl" style="left:20px;top:295.6px">您的代码整体逻辑是正确的，并且能够满足题目的要求。</div>
    <div class="tl" style="left:20px;top:329px">优点在于：</div>
    <div class="dot" style="top:370px"></div>
    <div class="tl" style="left:44px;top:361px">有效地使用了对象来统计数字的频率，这种方式简单直观。</div>
    <div class="tl" style="left:20px;top:392.5px">可改进的地方有：</div>
    <div class="dot" style="top:434.5px"></div>
    <div class="tl" style="left:44px;top:425.4px">代码的可读性方面，可以添加一些注释来解释关键步骤的作用，比如在计算频率的循环、排序</div>
    <div class="tl" style="left:44px;top:450px">的部分等。</div>
    <div class="dot" style="top:485px"></div>
    <div class="tl" style="left:44px;top:476px">在处理最终结果时，为了确保结果的准确性和稳定性，可以在 <code>map</code> 操作中将元素明确转换为</div>
    <div class="tl" style="left:44px;top:500.5px">字符串，像这样 <code>list.slice(0, k).map(item <span class="arr"><svg width="16" height="10" viewBox="0 0 16 10"><path d="M1.5 3h11M1.5 7h11M9.5 0.8L14 5 9.5 9.2" fill="none" stroke="#eceef2" stroke-width="1.7" stroke-linejoin="round"/></svg></span> String(item[0])).join(',');</code></div>

    <div class="abtn" style="left:20px"><svg width="14" height="14" viewBox="0 0 14 14"><path d="M2.2 6.2A4.9 4.9 0 0 1 11.3 4.2M11.8 7.8A4.9 4.9 0 0 1 2.7 9.8" fill="none" stroke="#c9cad0" stroke-width="1.3"/><path d="M11.6 1.8v2.8H8.8M2.4 12.2V9.4h2.8" fill="none" stroke="#c9cad0" stroke-width="1.3"/></svg></div>
    <div class="abs" style="left:56px;top:537px;width:1px;height:12px;background:#2a2b31"></div>
    <div class="abtn" style="left:69px"><svg width="14" height="14" viewBox="0 0 14 14"><path d="M1.5 6.2h2.3v6.3H1.5zM3.8 6.2l2.5-4.8c1 0 1.8.8 1.6 1.8L7.5 5.6h3.8c.8 0 1.4.7 1.2 1.5l-.9 4.3c-.2.7-.8 1.1-1.5 1.1H3.8" fill="none" stroke="#c9cad0" stroke-width="1.3" stroke-linejoin="round"/></svg></div>
    <div class="abtn" style="left:101px"><svg width="14" height="14" viewBox="0 0 14 14"><g transform="rotate(180 7 7)"><path d="M1.5 6.2h2.3v6.3H1.5zM3.8 6.2l2.5-4.8c1 0 1.8.8 1.6 1.8L7.5 5.6h3.8c.8 0 1.4.7 1.2 1.5l-.9 4.3c-.2.7-.8 1.1-1.5 1.1H3.8" fill="none" stroke="#c9cad0" stroke-width="1.3" stroke-linejoin="round"/></g></svg></div>

    <div class="card" style="top:578px"><span>需要一点思路提示</span><i><svg width="10" height="8" viewBox="0 0 10 8"><path d="M0.5 4h8.5M6 1l3 3-3 3" fill="none" stroke="#6d6f77" stroke-width="1.1"/></svg></i></div>
    <div class="card" style="top:618px"><span>给我一些代码提示吧</span><i><svg width="10" height="8" viewBox="0 0 10 8"><path d="M0.5 4h8.5M6 1l3 3-3 3" fill="none" stroke="#6d6f77" stroke-width="1.1"/></svg></i></div>
    <div class="card" style="top:658px"><span>帮我检查一下代码</span><i><svg width="10" height="8" viewBox="0 0 10 8"><path d="M0.5 4h8.5M6 1l3 3-3 3" fill="none" stroke="#6d6f77" stroke-width="1.1"/></svg></i></div>
  </div>
  <div class="abs" style="left:12px;top:772px;width:610px;height:68px;border-radius:7px;padding:1px;background:radial-gradient(circle at 100% 0%,#a050e0 0,rgba(160,80,224,0) 22px),linear-gradient(90deg,#3f6fd8 0%,#5f86d6 25%,#9ea2b6 55%,#c9a080 78%,#e07a3c 100%)"><div style="width:100%;height:100%;border-radius:6px;background:#1b1c21"></div></div>
  <div class="abs" style="left:23px;top:783px;font-size:13px;color:#8d8f98;line-height:16px">你可以问我问题</div>
  <svg class="abs" style="left:592px;top:812px" width="18" height="17" viewBox="0 0 18 17"><path d="M17 0.8L0.8 7.5l5.6 2.2 1.6 6.3 2.8-4.2z" fill="#6a6c74"/><path d="M17 0.8L6.4 9.7" stroke="#3d3e44" stroke-width="1"/></svg>
</div>
<div class="abs" style="left:1882px;top:44px;width:32px;height:56px;border-radius:16px;padding:1.5px;background:linear-gradient(180deg,#a6acd8 0%,#b8b0c4 55%,#c9aaa8 100%)"><div style="width:100%;height:100%;border-radius:15px;background:#242529"></div></div>
<svg class="abs" style="left:1891px;top:56px" width="14" height="14" viewBox="0 0 14 14"><g stroke-width="1.5" stroke-linecap="round"><path d="M7 1v2M1 7h2M11 7h2M2.8 2.8l1.3 1.3M11.2 2.8L9.9 4.1M2.8 11.2l1.3-1.3" stroke="#8f96e8"/><path d="M5.6 5.6l5.6 5.6" stroke="#f0a860"/><path d="M7 11v2" stroke="#8f96e8"/></g></svg>
<div class="abs" style="left:1889px;top:76px;width:18px;text-align:center;font-size:12px;font-weight:bold;color:#fff;line-height:14px">AI</div>
<svg class="abs" style="left:1890px;top:114px" width="16" height="16" viewBox="0 0 16 16"><g fill="none" stroke="#c5c6cc" stroke-width="1.4"><path d="M4.5 6.5h7v4.5a3.5 3.5 0 0 1-7 0z"/><path d="M5.5 6.5V5.5a2.5 2.5 0 0 1 5 0v1M8 7v7.5M1.5 8.2h3M11.5 8.2h3M1.8 12.8l2.8-1.2M14.2 12.8l-2.8-1.2M2.5 4l2.2 2M13.5 4l-2.2 2"/></g></svg>
<div class="abs" style="left:1882px;top:857px;width:31px;height:31px;border-radius:6px;background:#393a43"></div>
<div class="abs" style="left:1891px;top:866px;width:14px;height:14px;border:2px solid #ecedf0;border-bottom-width:6px;border-radius:1px;background:#3a3c45"></div>
<div class="abs" style="left:1660px;top:865px;font-size:25px;line-height:30px;color:#e2e2e4;white-space:nowrap;text-shadow:0 0 2px #000,0 0 2px #000,1px 1px 1px #000,-1px -1px 1px #000">掘金技术社区 @ zer0</div>

<div id="status">
  <svg class="abs" style="left:32px;top:6px" width="12" height="12" viewBox="0 0 12 12"><circle cx="6" cy="6" r="6" fill="#b3b5c0"/><path d="M4 4l4 4M8 4l-4 4" stroke="#3b3d4a" stroke-width="1.3"/></svg>
  <div class="abs" style="left:48px;top:0;font-size:12px;color:#a9abb7">0</div>
  <svg class="abs" style="left:59px;top:6px" width="12" height="12" viewBox="0 0 12 12"><circle cx="6" cy="6" r="6" fill="#b3b5c0"/><path d="M6 2.8v4.2" stroke="#3b3d4a" stroke-width="1.6"/><circle cx="6" cy="8.8" r=".9" fill="#3b3d4a"/></svg>
  <div class="abs" style="left:75px;top:0;font-size:12px;color:#a9abb7">0</div>
  <div class="abs" style="left:1634px;top:0;white-space:nowrap">行 14，列 1</div>
  <div class="abs" style="left:1712px;top:0;white-space:nowrap">空格: 4</div>
  <div class="abs" style="left:1764px;top:0;white-space:nowrap">UTF-8</div>
  <div class="abs" style="left:1812px;top:0;white-space:nowrap">LF</div>
  <div class="abs" style="left:1835px;top:0;white-space:nowrap">Markdown</div>
</div>
</body></html>
